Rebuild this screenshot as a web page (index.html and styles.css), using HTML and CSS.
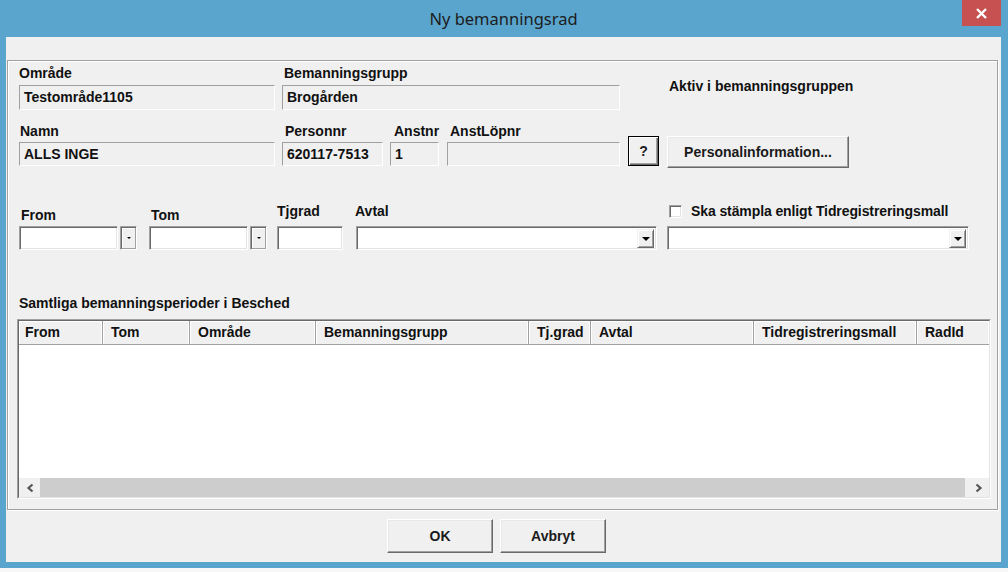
FILE: index.html
```html
<!DOCTYPE html>
<html lang="sv">
<head>
<meta charset="utf-8">
<title>Ny bemanningsrad</title>
<link rel="stylesheet" href="styles.css">
</head>
<body>
<div class="window">
  <div class="titlebar">
    <span class="title">Ny bemanningsrad</span>
    <div class="close"><svg width="11" height="11" viewBox="0 0 11 11"><path d="M1 1 L10 10 M10 1 L1 10" stroke="#fff" stroke-width="2.4" fill="none"/></svg></div>
  </div>
  <div class="client">
    <div class="group">
      <div class="row row1">
        <div class="f w-namn"><div class="lbl">Område</div><div class="ro h25">Testområde1105</div></div>
        <div class="f w-bgrp"><div class="lbl lp2">Bemanningsgrupp</div><div class="ro h25">Brogården</div></div>
        <div class="aktiv lbl">Aktiv i bemanningsgruppen</div>
      </div>
      <div class="row row2">
        <div class="f w-namn"><div class="lbl lp1 mb3">Namn</div><div class="ro">ALLS INGE</div></div>
        <div class="f w-pnr"><div class="lbl lp3 mb3">Personnr</div><div class="ro">620117-7513</div></div>
        <div class="f w-anst"><div class="lbl lp4 mb3">Anstnr</div><div class="ro">1</div></div>
        <div class="f w-lop"><div class="lbl lp3 mb3">AnstLöpnr</div><div class="ro"></div></div>
        <div class="btn btn-q">?</div>
        <div class="btn btn-pers">Personalinformation...</div>
      </div>
      <div class="row row3">
        <div class="f w-date">
          <div class="lbl lp2 mb3">From</div>
          <div class="dline"><div class="inp w-din"></div><div class="dbtn"><svg width="4" height="2" viewBox="0 0 4 2"><path d="M0 0 H4 L2 2 Z" fill="#000"/></svg></div></div>
        </div>
        <div class="f w-date ml12">
          <div class="lbl lp2 mb3">Tom</div>
          <div class="dline"><div class="inp w-din"></div><div class="dbtn"><svg width="4" height="2" viewBox="0 0 4 2"><path d="M0 0 H4 L2 2 Z" fill="#000"/></svg></div></div>
        </div>
        <div class="f w-tj"><div class="lbl mb7">Tjgrad</div><div class="inp"></div></div>
        <div class="f w-avtal"><div class="lbl lpm1 mb7">Avtal</div><div class="inp combo"><div class="cbtn"><svg width="8" height="4" viewBox="0 0 8 4"><path d="M0 0 H8 L4 4 Z" fill="#000"/></svg></div></div></div>
        <div class="f w-mall">
          <div class="chkline mb7"><span class="chk"></span><span class="lbl">Ska stämpla enligt Tidregistreringsmall</span></div>
          <div class="inp combo"><div class="cbtn"><svg width="8" height="4" viewBox="0 0 8 4"><path d="M0 0 H8 L4 4 Z" fill="#000"/></svg></div></div>
        </div>
      </div>
      <div class="lbl samtliga">Samtliga bemanningsperioder i Besched</div>
      <div class="table">
        <div class="tinner">
          <div class="thead">
            <div class="th c1">From</div>
            <div class="th c2">Tom</div>
            <div class="th c3">Område</div>
            <div class="th c4">Bemanningsgrupp</div>
            <div class="th c5">Tj.grad</div>
            <div class="th c6">Avtal</div>
            <div class="th c7">Tidregistreringsmall</div>
            <div class="th c8">RadId</div>
          </div>
          <div class="tbody"></div>
          <div class="hscroll">
            <div class="sarrow"><svg width="8" height="10" viewBox="0 0 8 10"><path d="M6.5 1.5 L2.5 5 L6.5 8.5" stroke="#555" stroke-width="2.2" fill="none"/></svg></div>
            <div class="track"><div class="thumb"></div></div>
            <div class="sarrow r"><svg width="8" height="10" viewBox="0 0 8 10"><path d="M1.5 1.5 L5.5 5 L1.5 8.5" stroke="#555" stroke-width="2.2" fill="none"/></svg></div>
          </div>
        </div>
      </div>
    </div>
    <div class="actions">
      <div class="btn btn-act">OK</div>
      <div class="btn btn-act">Avbryt</div>
    </div>
  </div>
</div>
</body>
</html>
```

FILE: styles.css
```css
* { box-sizing: border-box; }
html, body { margin: 0; padding: 0; }
body {
  width: 1008px;
  height: 572px;
  overflow: hidden;
  background: #f7f7f7;
  font-family: "Liberation Sans", Arial, sans-serif;
  color: #111;
}
.window {
  width: 1008px;
  height: 568px;
  background: #5aa5cd;
  padding: 0 7px 6px 6px;
  display: flex;
  flex-direction: column;
}
.titlebar {
  height: 37px;
  position: relative;
  display: flex;
  align-items: center;
  justify-content: center;
}
.title {
  font-family: "Noto Sans", "Open Sans", sans-serif;
  font-size: 16.5px;
  color: #1c1c1c;
  margin-top: -1px;
}
.close {
  position: absolute;
  right: 0;
  top: 0;
  width: 39px;
  height: 26px;
  background: #c75050;
  display: flex;
  align-items: center;
  justify-content: center;
}
.client {
  flex: 1;
  background: #f0f0f0;
  padding: 23px 0 0 1px;
  display: flex;
  flex-direction: column;
}
.group {
  width: 991px;
  height: 450px;
  border: 1px solid #a0a0a0;
  box-shadow: inset 1px 1px #fff, 1px 1px #fff;
  padding: 4px 0 0 11px;
  display: flex;
  flex-direction: column;
}
.row { display: flex; align-items: flex-end; }
.f { display: flex; flex-direction: column; }
.lbl {
  font-weight: bold;
  font-size: 14px;
  line-height: 16px;
  height: 16px;
  white-space: nowrap;
}
.row1 { align-items: flex-start; }
.row1 .lbl { margin-bottom: 4px; }
.lp1 { padding-left: 1px; }
.lp2 { padding-left: 2px; }
.lp3 { padding-left: 3px; }
.lp4 { padding-left: 4px; }
.lpm1 { margin-left: -1px; }
.mb3 { margin-bottom: 3px; }
.mb7 { margin-bottom: 7px; }
.ml12 { margin-left: 12px; }

.ro {
  height: 24px;
  background: #f0f0f0;
  border: 1px solid;
  border-color: #a0a0a0 #fff #fff #a0a0a0;
  font-weight: bold;
  font-size: 14px;
  line-height: 22px;
  padding-left: 4px;
  white-space: nowrap;
}
.h25 { height: 25px; line-height: 23px; }
.w-namn { width: 256px; }
.w-bgrp { width: 338px; margin-left: 7px; }
.aktiv { margin-left: 49px; margin-top: 13px; }

.row2 { margin-top: 13px; }
.w-pnr { width: 101px; margin-left: 7px; }
.w-anst { width: 49px; margin-left: 7px; }
.w-lop { width: 173px; margin-left: 8px; }

.btn {
  background: #f0f0f0;
  border: 1px solid;
  border-color: #fff #696969 #696969 #fff;
  box-shadow: inset -1px -1px #a0a0a0, inset 1px 1px #e8e8e8;
  font-weight: bold;
  font-size: 14px;
  color: #1a1a1a;
  display: flex;
  align-items: center;
  justify-content: center;
  white-space: nowrap;
}
.btn-q {
  width: 31px;
  height: 30px;
  margin-left: 8px;
  border-color: #000;
  box-shadow: inset 1px 1px #fff, inset -1px -1px #696969, inset -2px -2px #a0a0a0;
}
.btn-pers {
  width: 182px;
  height: 32px;
  margin-left: 8px;
  margin-bottom: -2px;
}

.row3 { margin-top: 37px; }
.w-date { width: 118px; }
.dline { display: flex; }
.inp {
  height: 24px;
  background: #fff;
  border: 1px solid;
  border-color: #a0a0a0 #fff #fff #a0a0a0;
  box-shadow: inset 1px 1px #696969, inset -1px -1px #e3e3e3;
}
.w-din { width: 99px; }
.dbtn {
  width: 17px;
  height: 24px;
  margin-left: 2px;
  background: #f0f0f0;
  border: 1px solid;
  border-color: #a0a0a0 #fff #fff #a0a0a0;
  box-shadow: inset 1px 1px #696969, inset -1px -1px #a0a0a0, inset 2px 2px #fff;
  display: flex;
  align-items: center;
  justify-content: center;
}
.w-tj { width: 66px; margin-left: 10px; }
.w-avtal { width: 301px; margin-left: 13px; }
.w-mall { width: 302px; margin-left: 10px; }
.combo {
  display: flex;
  justify-content: flex-end;
  padding: 2px 2px 1px 0;
}
.cbtn {
  width: 17px;
  height: 100%;
  background: #f0f0f0;
  border: 1px solid;
  border-color: #f0f0f0 #696969 #696969 #f0f0f0;
  box-shadow: inset 1px 1px #fff, inset -1px -1px #a0a0a0;
  display: flex;
  align-items: center;
  justify-content: center;
}
.chkline { display: flex; align-items: center; height: 16px; }
.chk {
  width: 13px;
  height: 13px;
  margin-left: 2px;
  background: #fff;
  border: 1px solid;
  border-color: #a0a0a0 #fff #fff #a0a0a0;
  box-shadow: inset 1px 1px #696969, inset -1px -1px #e3e3e3;
}
.chkline .lbl { margin-left: 9px; letter-spacing: -0.1px; }

.samtliga { margin-top: 45px; }
.table {
  margin-top: 8px;
  margin-left: -2px;
  width: 974px;
  height: 180px;
  border: 1px solid;
  border-color: #a0a0a0 #fff #fff #a0a0a0;
}
.tinner {
  height: 100%;
  border: 1px solid;
  border-color: #696969 #e3e3e3 #e3e3e3 #696969;
  background: #fff;
  display: flex;
  flex-direction: column;
}
.thead {
  display: flex;
  height: 24px;
  background: #f0f0f0;
  border-bottom: 1px solid #a0a0a0;
  box-shadow: inset 0 1px #fff;
}
.th {
  font-weight: bold;
  font-size: 14px;
  line-height: 22px;
  padding-left: 8px;
  border-right: 1px solid #a0a0a0;
  box-shadow: inset -1px 0 #fff, inset 1px 0 #fff;
  white-space: nowrap;
  overflow: hidden;
}
.c1 { width: 84px; padding-left: 6px; }
.c2 { width: 87px; }
.c3 { width: 126px; }
.c4 { width: 213px; }
.c5 { width: 62px; }
.c6 { width: 163px; }
.c7 { width: 163px; }
.c8 { flex: 1; border-right: 0; }
.tbody { flex: 1; background: #fff; }
.hscroll {
  height: 19px;
  display: flex;
  background: #f0f0f0;
}
.sarrow {
  width: 21px;
  display: flex;
  align-items: center;
  justify-content: center;
}
.track { flex: 1; display: flex; padding-right: 3px; }
.thumb { flex: 1; background: #cdcdcd; }

.actions {
  display: flex;
  gap: 7px;
  margin-top: 9px;
  padding-left: 380px;
}
.btn-act { width: 106px; height: 34px; }
```
